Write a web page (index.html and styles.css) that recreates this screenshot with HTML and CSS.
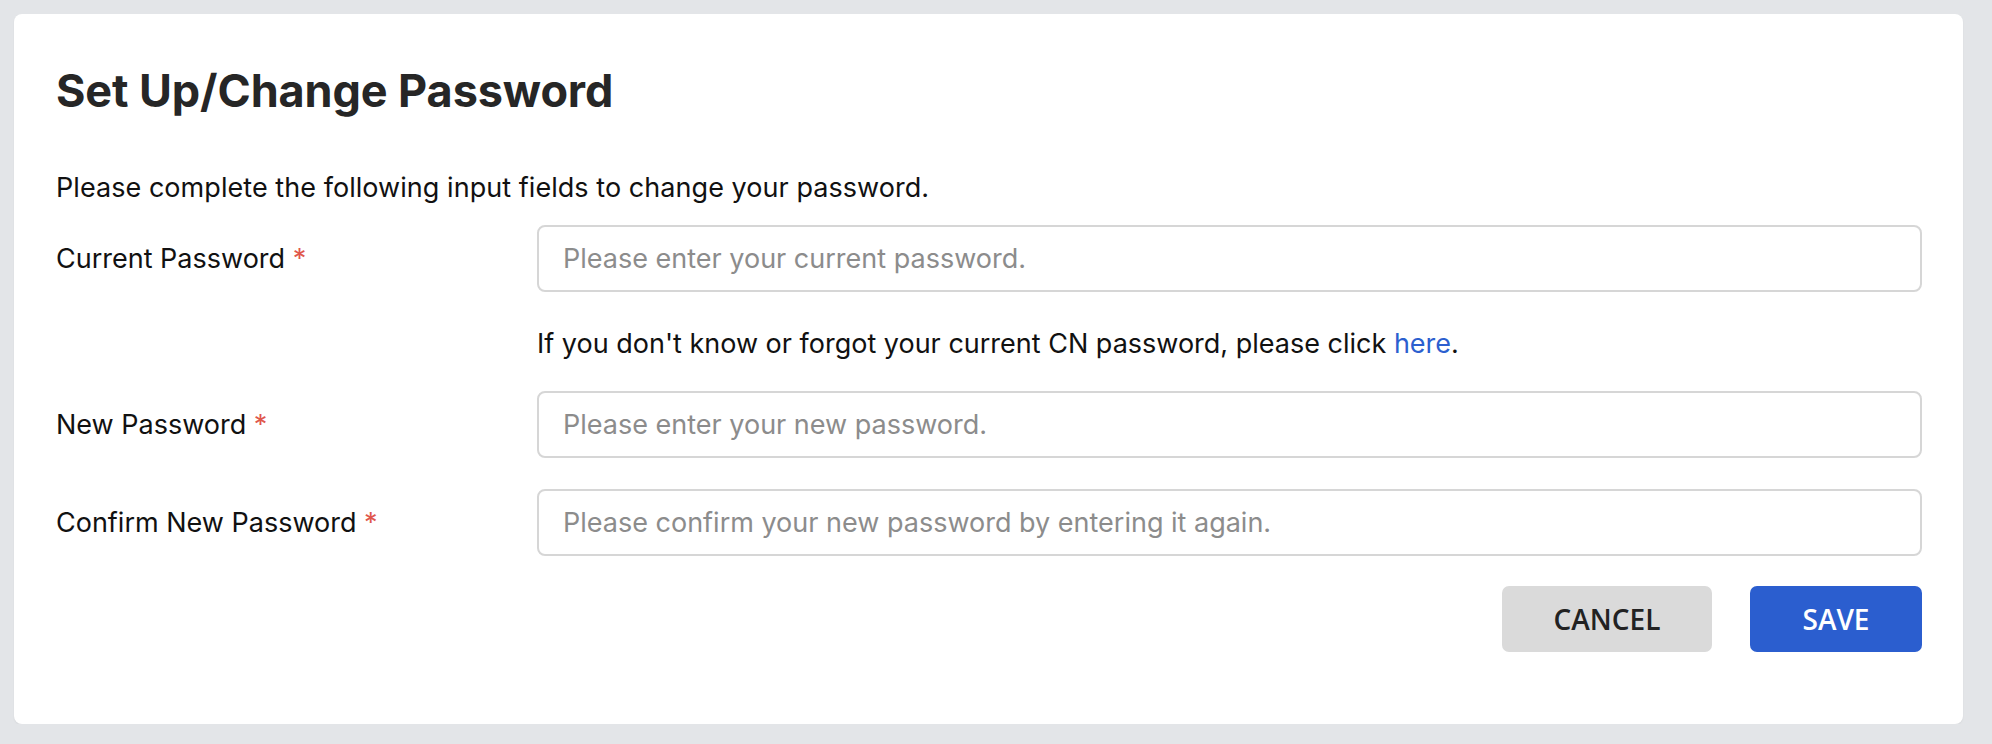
FILE: index.html
```html
<!DOCTYPE html>
<html lang="en">
<head>
<meta charset="utf-8">
<title>Set Up/Change Password</title>
<link rel="stylesheet" href="styles.css">
</head>
<body>
<main class="card">
  <h1 class="title">Set Up/Change Password</h1>
  <p class="intro">Please complete the following input fields to change your password.</p>
  <form class="form">
    <div class="row">
      <label class="label" for="cur">Current Password <span class="req">*</span></label>
      <input class="input" id="cur" type="password" placeholder="Please enter your current password.">
    </div>
    <p class="help">If you don't know or forgot your current CN password, please click <a class="link" href="#">here</a>.</p>
    <div class="row row-new">
      <label class="label" for="new">New Password <span class="req">*</span></label>
      <input class="input" id="new" type="password" placeholder="Please enter your new password.">
    </div>
    <div class="row row-confirm">
      <label class="label" for="conf">Confirm New Password <span class="req">*</span></label>
      <input class="input" id="conf" type="password" placeholder="Please confirm your new password by entering it again.">
    </div>
    <div class="actions">
      <button class="btn btn-cancel" type="button">CANCEL</button>
      <button class="btn btn-save" type="button">SAVE</button>
    </div>
  </form>
</main>
</body>
</html>
```

FILE: styles.css
```css
* { box-sizing: border-box; }
html, body { margin: 0; padding: 0; }
body {
  background: #e3e5e8;
  font-family: Inter, "Noto Sans", "Liberation Sans", sans-serif;
  color: #111;
  padding: 14px 0 0 14px;
}
.card {
  width: 1949px;
  height: 710px;
  background: #fff;
  border-radius: 8px;
  padding: 50px 41px 0 42px;
  box-shadow: 0 1px 2px rgba(0,0,0,0.06);
}
.title {
  margin: 0 0 54px;
  font-size: 45px;
  line-height: 54px;
  font-weight: 700;
  color: #262626;
  letter-spacing: -0.1px;
}
.intro {
  margin: 0 0 21px;
  font-size: 27px;
  line-height: 32px;
  letter-spacing: 0.05px;
}
.form { margin: 0; }
.row {
  display: flex;
  align-items: center;
}
.label {
  flex: 0 0 481px;
  font-size: 27px;
  line-height: 32px;
  color: #111;
}
.req { color: #e0574c; }
.input {
  flex: 1;
  height: 67px;
  border: 2px solid #d6d6d6;
  border-radius: 8px;
  padding: 0 24px;
  font-family: inherit;
  font-size: 27px;
  color: #111;
  background: #fff;
  outline: none;
}
.input::placeholder { color: #8c8c8c; }
.help {
  margin: 36px 0 31px 481px;
  font-size: 27px;
  line-height: 32px;
}
.link { color: #2c5fcf; text-decoration: none; }
.row-new { margin-bottom: 31px; }
.row-confirm { margin-bottom: 30px; }
.actions {
  display: flex;
  justify-content: flex-end;
  gap: 38px;
}
.btn {
  height: 66px;
  border: none;
  border-radius: 7px;
  font-family: "Open Sans", "Noto Sans", sans-serif;
  font-size: 28px;
  font-weight: 600;
  cursor: pointer;
}
.btn-cancel {
  width: 210px;
  background: #dadada;
  color: #222;
}
.btn-save {
  width: 172px;
  background: #2b5ecf;
  color: #fff;
}
```
